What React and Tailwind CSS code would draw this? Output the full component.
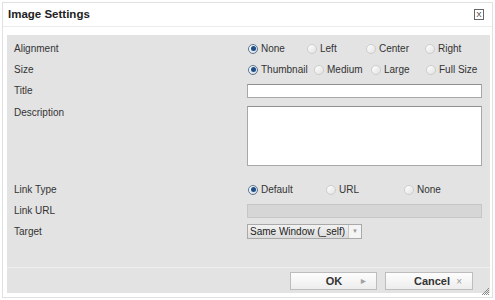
import React from 'react';

const Radio = ({ checked, label }) => (
  <span className="flex items-center gap-[3px] whitespace-nowrap">
    <span
      className={
        checked
          ? 'flex h-[10px] w-[10px] items-center justify-center rounded-full border border-[#5f7590] bg-gradient-to-br from-[#ffffff] to-[#cfd8e2]'
          : 'flex h-[10px] w-[10px] items-center justify-center rounded-full border border-[#cdcdcd] bg-gradient-to-br from-[#ffffff] to-[#e2e2e2]'
      }
    >
      {checked && <span className="h-[5px] w-[5px] rounded-full bg-[#1d4f86]" />}
    </span>
    <span>{label}</span>
  </span>
);

const Row = ({ label, children, className = 'h-[21px] items-center' }) => (
  <div className={`flex ${className}`}>
    <div className="w-[233px] shrink-0">{label}</div>
    <div className="w-[235px]">{children}</div>
  </div>
);

export default function App() {
  return (
    <div className="h-[300px] w-[495px] bg-white p-[2px] font-['Liberation_Sans',Arial,sans-serif] text-[10px] text-[#333]">
      <div className="relative h-[296px] border border-[#e0e0e0] bg-white">
        {/* header */}
        <div className="flex h-[24px] items-center justify-between border-b border-[#ececec] pl-[5px] pr-[8px]">
          <span className="text-[11.5px] font-bold text-[#222]">Image Settings</span>
          <span className="flex h-[11px] w-[10px] items-center justify-center border border-[#666] text-[8px] leading-none text-[#333]">
            X
          </span>
        </div>

        <div className="ml-[4px] mr-[2px] mt-[8px] bg-[#e3e3e3]">
          <div className="h-[232px] pl-[7px] pt-[3px]">
            <Row label="Alignment">
              <div className="flex">
                <div className="w-[59px] pl-[1px]"><Radio checked label="None" /></div>
                <div className="w-[59px] pl-[1px]"><Radio label="Left" /></div>
                <div className="w-[59px] pl-[1px]"><Radio label="Center" /></div>
                <div className="pl-[1px]"><Radio label="Right" /></div>
              </div>
            </Row>
            <Row label="Size">
              <div className="flex">
                <div className="w-[66px] pl-[1px]"><Radio checked label="Thumbnail" /></div>
                <div className="w-[57px] pl-[1px]"><Radio label="Medium" /></div>
                <div className="w-[55px] pl-[1px]"><Radio label="Large" /></div>
                <div className="pl-[1px]"><Radio label="Full Size" /></div>
              </div>
            </Row>
            <Row label="Title">
              <div className="h-[14px] border border-[#a8a8a8] border-t-[#8f8f8f] bg-white" />
            </Row>
            <div className="flex h-[78px]">
              <div className="w-[233px] shrink-0 pt-[4px]">Description</div>
              <div className="w-[235px] pt-[5px]">
                <div className="h-[60px] border border-[#a8a8a8] border-t-[#8f8f8f] bg-white" />
              </div>
            </div>
            <Row label="Link Type">
              <div className="flex">
                <div className="w-[78px] pl-[1px]"><Radio checked label="Default" /></div>
                <div className="w-[78px] pl-[1px]"><Radio label="URL" /></div>
                <div className="pl-[1px]"><Radio label="None" /></div>
              </div>
            </Row>
            <Row label="Link URL">
              <div className="h-[14px] border border-[#c6c6c6] bg-[#d6d6d6]" />
            </Row>
            <Row label="Target">
              <div className="flex h-[15px] w-[115px] items-center border border-[#a9a9a9] bg-gradient-to-b from-[#f2f2f2] to-[#dcdcdc] text-[#222]">
                <span className="flex-1 whitespace-nowrap pl-[2px] leading-none">Same Window (_self)</span>
                <span className="flex h-full w-[13px] items-center justify-center border-l border-[#c8c8c8] bg-[#f4f4f4] text-[6px] text-[#9a9a9a]">
                  ▼
                </span>
              </div>
            </Row>
          </div>

          <div className="h-px bg-[#efefef]" />

          <div className="flex h-[25px] justify-end gap-[8px] pr-[17px] pt-[4px] text-[11px] font-bold text-[#333]">
            <button className="relative flex h-[18px] w-[87px] items-center justify-center border border-[#bdbdbd] bg-gradient-to-b from-[#fdfdfd] to-[#ededed]">
              <span className="pl-[1px]">OK</span>
              <span className="absolute right-[10px] text-[6px] text-[#a0a0a0]">▶</span>
            </button>
            <button className="relative flex h-[18px] w-[88px] items-center justify-center border border-[#bdbdbd] bg-gradient-to-b from-[#fdfdfd] to-[#ededed]">
              <span className="pl-[6px]">Cancel</span>
              <span className="absolute right-[10px] text-[10px] font-normal text-[#9a9a9a]">×</span>
            </button>
          </div>
        </div>

        {/* resize grip */}
        <svg className="absolute bottom-[1px] right-[2px]" width="9" height="9" viewBox="0 0 9 9">
          <path d="M8 1L1 8M8 3L3 8M8 5L5 8M8 7L7 8" stroke="#8a8a8a" strokeWidth="1" />
        </svg>
      </div>
    </div>
  );
}
